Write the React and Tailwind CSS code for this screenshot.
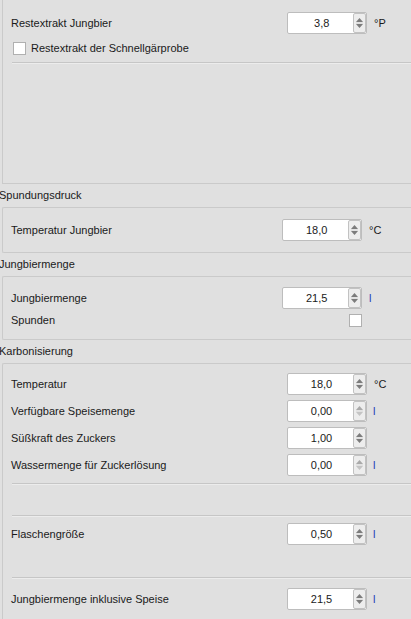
import React from "react";

function Arrows({ dim }) {
  const up = dim ? "#a9a9a9" : "#7c7c7c";
  const down = dim ? "#c4c4c4" : "#7c7c7c";
  return (
    <div className="w-[13px] h-full flex items-center justify-center bg-[#ededed] border border-[#c2c2c2] rounded-[2px]">
      <svg width="9" height="14" viewBox="0 0 9 14">
        <polygon points="1,6 4.5,2 8,6" fill={up} />
        <line x1="1" y1="7" x2="8" y2="7" stroke="#d6d6d6" strokeWidth="1" />
        <polygon points="1,8 4.5,12 8,8" fill={down} />
      </svg>
    </div>
  );
}

function Spin({ value, dim }) {
  return (
    <div className="w-[80px] h-[22px] flex items-stretch bg-white border border-[#bdbdbd] rounded-[2px]">
      <div className="flex-1 flex items-center justify-center pl-[2px] text-[#1a1a1a]">{value}</div>
      <Arrows dim={dim} />
    </div>
  );
}

function Row({ label, value, unit, labelW, unitW, blue, dim, padCls = "pl-[7px]" }) {
  return (
    <div className="flex items-center h-[22px]">
      <div className="pl-[8px]" style={{ width: labelW }}>{label}</div>
      <Spin value={value} dim={dim} />
      <div className={padCls} style={{ width: unitW }}>
        <span className={blue ? "text-[#2438b8]" : "text-[#1a1a1a]"}>{unit}</span>
      </div>
    </div>
  );
}

function Sep({ className }) {
  return (
    <div className={`ml-[9px] border-t border-[#c6c6c6] border-b border-b-[#ececec] ${className || ""}`} />
  );
}

function Title({ children }) {
  return (
    <div className="h-[23px] flex items-center -ml-[1px] text-[#1a1a1a]">{children}</div>
  );
}

function Check({ className }) {
  return <div className={`w-[13px] h-[13px] bg-white border border-[#b0b0b0] ${className || ""}`} />;
}

export default function App() {
  return (
    <div className="w-[411px] h-[619px] overflow-hidden bg-[#e0e0e0] text-[11px] text-[#1a1a1a] font-['Liberation_Sans',Arial,sans-serif] leading-none">
      {/* Group 1 */}
      <div className="ml-[2px] h-[184px] border-l border-b border-[#cacaca] flex flex-col pt-[12px]">
        <Row label="Restextrakt Jungbier" value="3,8" unit="°P" labelW="285px" unitW="44px" />
        <div className="flex items-center mt-[8px] h-[13px] pl-[10px]">
          <Check />
          <span className="ml-[5px]">Restextrakt der Schnellgärprobe</span>
        </div>
        <Sep className="mt-[7px]" />
      </div>

      <Title>Spundungsdruck</Title>
      <div className="ml-[2px] h-[46px] border border-r-0 border-[#cacaca] rounded-l-[2px] pt-[11px]">
        <Row label="Temperatur Jungbier" value="18,0" unit="°C" labelW="280px" unitW="49px" />
      </div>

      <Title>Jungbiermenge</Title>
      <div className="ml-[2px] h-[64px] border border-r-0 border-[#cacaca] rounded-l-[2px] pt-[10px]">
        <Row label="Jungbiermenge" value="21,5" unit="l" labelW="280px" unitW="49px" blue padCls="pl-[7px]" />
        <div className="flex items-center h-[13px] mt-[5px]">
          <div className="pl-[8px] w-[346px]">Spunden</div>
          <Check />
        </div>
      </div>

      <Title>Karbonisierung</Title>
      <div className="ml-[2px] h-[300px] border border-r-0 border-[#cacaca] rounded-l-[2px] pt-[9px] flex flex-col">
        <div className="flex flex-col gap-[5px]">
          <Row label="Temperatur" value="18,0" unit="°C" labelW="284px" unitW="44px" />
          <Row label="Verfügbare Speisemenge" value="0,00" unit="l" labelW="284px" unitW="44px" blue dim padCls="pl-[6px]" />
          <Row label="Süßkraft des Zuckers" value="1,00" unit="" labelW="284px" unitW="44px" />
          <Row label="Wassermenge für Zuckerlösung" value="0,00" unit="l" labelW="284px" unitW="44px" blue dim padCls="pl-[6px]" />
        </div>
        <Sep className="mt-[7px]" />
        <div className="h-[30px]" />
        <Sep />
        <div className="mt-[6px]">
          <Row label="Flaschengröße" value="0,50" unit="l" labelW="284px" unitW="44px" blue padCls="pl-[6px]" />
        </div>
        <div className="h-[32px]" />
        <Sep />
        <div className="mt-[9px]">
          <Row label="Jungbiermenge inklusive Speise" value="21,5" unit="l" labelW="284px" unitW="44px" blue padCls="pl-[6px]" />
        </div>
      </div>
    </div>
  );
}
